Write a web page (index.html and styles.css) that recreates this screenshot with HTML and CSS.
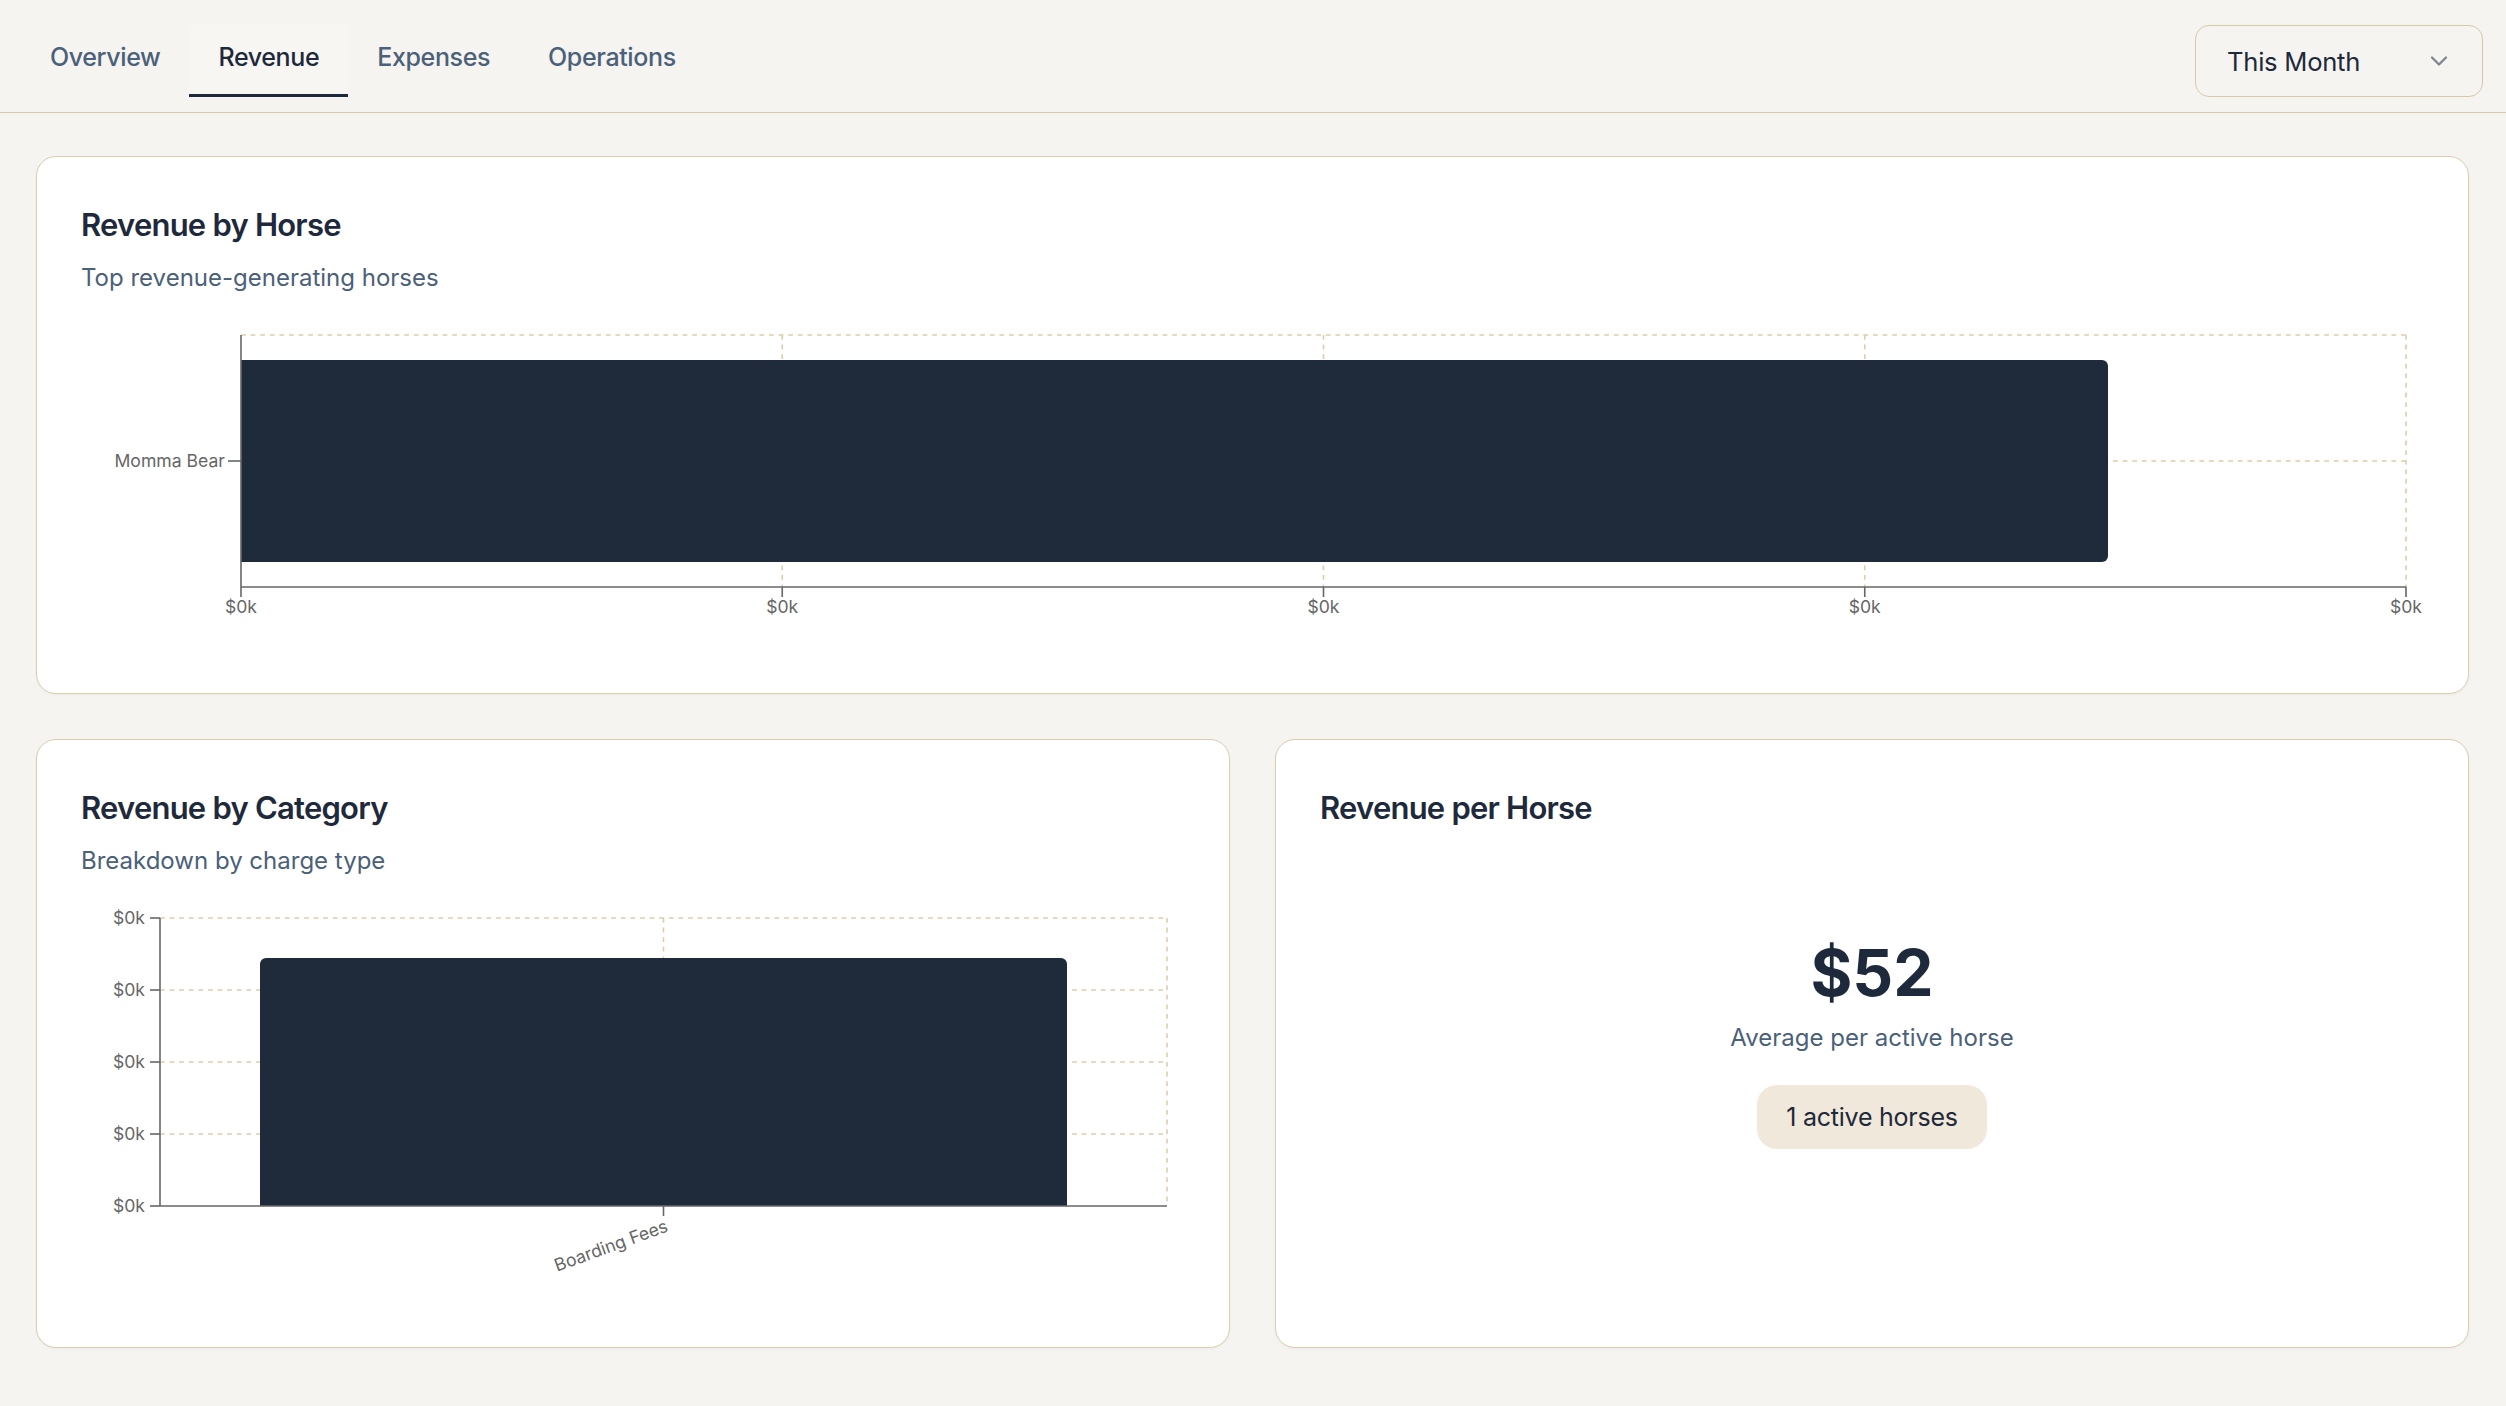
FILE: index.html
```html
<!DOCTYPE html>
<html lang="en">
<head>
    <meta charset="UTF-8">
    <meta name="viewport" content="width=device-width, initial-scale=1.0">
    <title>Revenue Reports</title>
    <link rel="stylesheet" href="styles.css">
</head>
<body>
    <header class="topbar">
        <nav class="tabs">
            <a class="tab">Overview</a>
            <a class="tab active">Revenue</a>
            <a class="tab">Expenses</a>
            <a class="tab">Operations</a>
        </nav>
        <button class="period-select">
            <span>This Month</span>
            <svg class="chevron" width="28" height="28" viewBox="0 0 24 24" fill="none" stroke="currentColor" stroke-width="2" stroke-linecap="round" stroke-linejoin="round"><path d="m6 9 6 6 6-6"/></svg>
        </button>
    </header>

    <main class="content">
        <section class="card">
            <h2 class="card-title">Revenue by Horse</h2>
            <p class="card-desc">Top revenue-generating horses</p>
            <div class="chart">
                <svg width="2343" height="335" viewBox="0 0 2343 335">
                    <g class="grid">
                        <line x1="160" y1="20" x2="2325" y2="20"/>
                        <line x1="160" y1="146" x2="2325" y2="146"/>
                        <line x1="701.25" y1="20" x2="701.25" y2="272"/>
                        <line x1="1242.5" y1="20" x2="1242.5" y2="272"/>
                        <line x1="1783.75" y1="20" x2="1783.75" y2="272"/>
                        <line x1="2325" y1="20" x2="2325" y2="272"/>
                    </g>
                    <path class="bar" d="M160 45 H2021 A6 6 0 0 1 2027 51 V241 A6 6 0 0 1 2021 247 H160 Z"/>
                    <g class="axis">
                        <line x1="160" y1="20" x2="160" y2="272"/>
                        <line x1="147" y1="146" x2="160" y2="146"/>
                        <line x1="160" y1="272" x2="2325" y2="272"/>
                        <line x1="160" y1="272" x2="160" y2="282"/>
                        <line x1="701.25" y1="272" x2="701.25" y2="282"/>
                        <line x1="1242.5" y1="272" x2="1242.5" y2="282"/>
                        <line x1="1783.75" y1="272" x2="1783.75" y2="282"/>
                        <line x1="2325" y1="272" x2="2325" y2="282"/>
                    </g>
                    <text class="tick" x="144" y="146" dy="0.355em" text-anchor="end">Momma Bear</text>
                    <text class="tick" x="160" y="298" text-anchor="middle">$0k</text>
                    <text class="tick" x="701.25" y="298" text-anchor="middle">$0k</text>
                    <text class="tick" x="1242.5" y="298" text-anchor="middle">$0k</text>
                    <text class="tick" x="1783.75" y="298" text-anchor="middle">$0k</text>
                    <text class="tick" x="2325" y="298" text-anchor="middle">$0k</text>
                </svg>
            </div>
        </section>

        <div class="row">
            <section class="card">
                <h2 class="card-title">Revenue by Category</h2>
                <p class="card-desc">Breakdown by charge type</p>
                <div class="chart">
                    <svg width="1104" height="406" viewBox="0 0 1104 406">
                        <g class="grid">
                            <line x1="79" y1="20" x2="1086" y2="20"/>
                            <line x1="79" y1="92" x2="1086" y2="92"/>
                            <line x1="79" y1="164" x2="1086" y2="164"/>
                            <line x1="79" y1="236" x2="1086" y2="236"/>
                            <line x1="582.5" y1="20" x2="582.5" y2="308"/>
                            <line x1="1086" y1="20" x2="1086" y2="308"/>
                        </g>
                        <path class="bar" d="M179 308 V66 A6 6 0 0 1 185 60 H980 A6 6 0 0 1 986 66 V308 Z"/>
                        <g class="axis">
                            <line x1="79" y1="20" x2="79" y2="308"/>
                            <line x1="69" y1="20" x2="79" y2="20"/>
                            <line x1="69" y1="92" x2="79" y2="92"/>
                            <line x1="69" y1="164" x2="79" y2="164"/>
                            <line x1="69" y1="236" x2="79" y2="236"/>
                            <line x1="69" y1="308" x2="79" y2="308"/>
                            <line x1="79" y1="308" x2="1086" y2="308"/>
                            <line x1="582.5" y1="308" x2="582.5" y2="318"/>
                        </g>
                        <text class="tick" x="64" y="20" dy="0.355em" text-anchor="end">$0k</text>
                        <text class="tick" x="64" y="92" dy="0.355em" text-anchor="end">$0k</text>
                        <text class="tick" x="64" y="164" dy="0.355em" text-anchor="end">$0k</text>
                        <text class="tick" x="64" y="236" dy="0.355em" text-anchor="end">$0k</text>
                        <text class="tick" x="64" y="308" dy="0.355em" text-anchor="end">$0k</text>
                        <text class="tick" x="588" y="333" text-anchor="end" transform="rotate(-20 588 333)">Boarding Fees</text>
                    </svg>
                </div>
            </section>

            <section class="card">
                <h2 class="card-title">Revenue per Horse</h2>
                <div class="stat">
                    <div class="stat-value">$52</div>
                    <div class="stat-label">Average per active horse</div>
                    <span class="badge">1 active horses</span>
                </div>
            </section>
        </div>
    </main>
</body>
</html>
```

FILE: styles.css
```css
body {
    margin: 0;
    font-family: Inter, "Noto Sans", sans-serif;
    background-color: #f5f4f0;
    color: #1e293b;
}

.topbar {
    display: flex;
    justify-content: space-between;
    align-items: flex-start;
    padding: 25px 23px 15px 21px;
    border-bottom: 1px solid #d8c9a6;
}

.tabs {
    display: flex;
}

.tab {
    padding: 13px 29px 18px;
    font-size: 25px;
    font-weight: 500;
    line-height: 38px;
    letter-spacing: -0.015em;
    color: #4b6079;
    border-bottom: 3px solid transparent;
    cursor: pointer;
}

.tab.active {
    color: #1e293b;
    background-color: #f7f6f3;
    border-bottom-color: #1e293b;
}

.period-select {
    display: flex;
    align-items: center;
    justify-content: space-between;
    box-sizing: border-box;
    width: 288px;
    height: 72px;
    padding: 0 29px 0 31px;
    font-family: inherit;
    font-size: 25.6px;
    letter-spacing: -0.01em;
    color: #1e293b;
    background-color: #f5f4f0;
    border: 1px solid #d8c9a6;
    border-radius: 14px;
}

.chevron {
    color: #7e8692;
}

.content {
    display: flex;
    flex-direction: column;
    gap: 45px;
    padding: 43px 37px 40px 36px;
}

.row {
    display: grid;
    grid-template-columns: 1fr 1fr;
    gap: 45px;
}

.card {
    background-color: white;
    border: 1px solid #dccdae;
    border-radius: 20px;
    padding: 49px 44px 43px;
    box-shadow: 0 1px 3px rgba(0,0,0,0.04);
    display: flex;
    flex-direction: column;
}

.card-title {
    margin: 0;
    font-size: 31px;
    line-height: 38px;
    font-weight: 600;
    letter-spacing: -0.025em;
    color: #1e293b;
}

.card-desc {
    margin: 18px 0 0;
    font-size: 24px;
    line-height: 32px;
    color: #4b6079;
}

.chart {
    margin-top: 21px;
}

.chart svg {
    display: block;
}

.grid line {
    stroke: #dfcda9;
    stroke-width: 1.6;
    stroke-dasharray: 4.8 4.8;
}

.axis line {
    stroke: #666;
    stroke-width: 1.6;
}

.bar {
    fill: #1f2a3b;
}

.tick {
    font-family: Inter, "Noto Sans", sans-serif;
    font-size: 17.6px;
    fill: #666;
}

.stat {
    display: flex;
    flex-direction: column;
    align-items: center;
    margin-top: 107px;
}

.stat-value {
    font-size: 64px;
    line-height: 78px;
    font-weight: 700;
    color: #1e293b;
}

.stat-label {
    margin-top: 10px;
    font-size: 24px;
    line-height: 32px;
    color: #4b6079;
}

.badge {
    margin-top: 31px;
    padding: 13px 29px;
    font-size: 25px;
    line-height: 38px;
    letter-spacing: -0.01em;
    color: #1e293b;
    background-color: #f0e8da;
    border-radius: 20px;
}
```
